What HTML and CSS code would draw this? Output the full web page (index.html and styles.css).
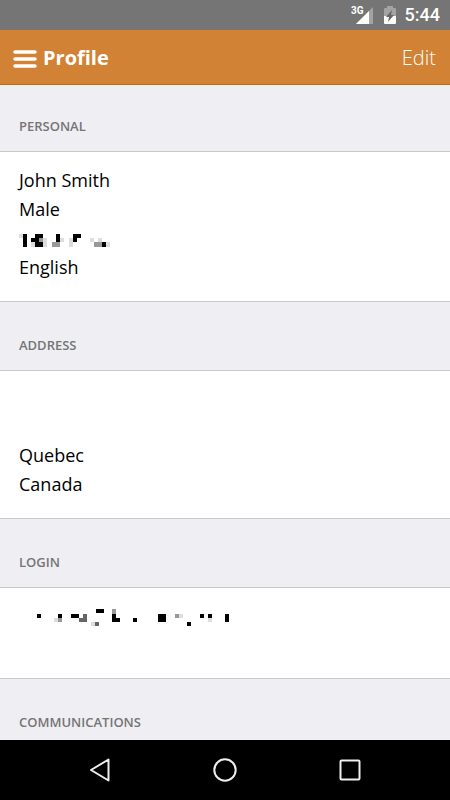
FILE: index.html
```html
<!DOCTYPE html>
<html lang="en">
<head>
<meta charset="utf-8">
<meta name="viewport" content="width=device-width, initial-scale=1">
<title>Profile</title>
<link rel="stylesheet" href="styles.css">
</head>
<body>
<div class="status">
  <svg class="signal" width="24" height="20" viewBox="0 0 24 20" aria-hidden="true">
    <path d="M22 2V19H5Z" fill="#a3a3a3"/>
    <path d="M18 6V19H5Z" fill="#fff"/>
    <text class="network" x="0" y="9">3G</text>
  </svg>
  <svg class="battery" width="12" height="20" viewBox="0 0 12 20" aria-hidden="true">
    <path d="M3 1H9V3H11Q12 3 12 4V11H0V4Q0 3 1 3H3Z" fill="#a3a3a3"/>
    <path d="M0 11H12V18Q12 19 11 19H1Q0 19 0 18Z" fill="#fff"/>
    <path d="M8 5L2 12H5L4 17L10 10H7Z" fill="#666"/>
  </svg>
  <span class="clock">5:44</span>
</div>
<header class="bar">
  <button class="menu" type="button" aria-label="Menu">
    <svg width="24" height="18" viewBox="0 0 24 18" aria-hidden="true">
      <path d="M2 2H22M2 9H22M2 16H22" stroke="#fff" stroke-width="3.500" stroke-linecap="round"/>
    </svg>
  </button>
  <h1 class="title">Profile</h1>
  <a class="edit" href="#edit">Edit</a>
</header>
<main class="content">
  <h2 class="heading">Personal</h2>
  <ul class="group">
    <li>John Smith</li>
    <li>Male</li>
    <li>
      <svg class="redacted" width="212" height="29" shape-rendering="crispEdges" aria-hidden="true">
        <path fill="#000" d="M4 10h4v13h-4zM16 10h8v4h-8zM12 14h8v4h-8zM16 18h8v5h-8zM37 10h4v8h-4zM54 10h8v4h-8zM54 14h4v4h-4zM83 18h4v5h-4z"/>
        <path fill="#999" d="M20 14h4v4h-4zM33 18h8v5h-8zM75 18h8v5h-8z"/>
        <path fill="#ddd" d="M0 10h4v4h-4zM24 14h4v9h-4zM12 18h4v5h-4zM41 14h4v4h-4zM50 14h4v4h-4zM50 18h4v5h-4zM71 14h4v4h-4zM79 14h4v4h-4zM87 18h4v5h-4z"/>
      </svg>
    </li>
    <li>English</li>
  </ul>
  <h2 class="heading">Address</h2>
  <ul class="group">
    <li></li>
    <li></li>
    <li>Quebec</li>
    <li>Canada</li>
  </ul>
  <h2 class="heading">Login</h2>
  <ul class="group">
    <li>
      <svg class="redacted" width="212" height="29" shape-rendering="crispEdges" aria-hidden="true">
        <path fill="#000" d="M18 12h4v4h-4zM39 12h4v4h-4zM52 12h8v4h-8zM77 7h8v4h-8zM93 12h4v8h-4zM97 16h4v4h-4zM114 16h4v4h-4zM139 12h8v8h-8zM168 20h4v4h-4zM181 12h4v4h-4zM189 12h4v4h-4zM206 12h4v8h-4z"/>
        <path fill="#666" d="M64 12h4v8h-4zM60 16h4v4h-4zM76 20h4v4h-4z"/>
        <path fill="#999" d="M93 7h4v5h-4zM156 12h4v4h-4zM39 16h4v4h-4z"/>
        <path fill="#ddd" d="M35 16h4v4h-4zM72 20h4v4h-4zM160 12h4v4h-4zM189 16h4v4h-4z"/>
      </svg>
    </li>
    <li></li>
  </ul>
  <h2 class="heading">Communications</h2>
</main>
<nav class="system">
  <button type="button" aria-label="Back">
    <svg width="24" height="26" viewBox="0 0 24 26" aria-hidden="true"><path d="M20.500 2.500V23.500L3 13Z"/></svg>
  </button>
  <button type="button" aria-label="Home">
    <svg width="24" height="26" viewBox="0 0 24 26" aria-hidden="true"><circle cx="12" cy="13" r="10.700"/></svg>
  </button>
  <button type="button" aria-label="Recent apps">
    <svg width="24" height="26" viewBox="0 0 24 26" aria-hidden="true"><rect x="2.500" y="3.500" width="19" height="19" rx="1"/></svg>
  </button>
</nav>
</body>
</html>
```
FILE: styles.css
```css
* {
  box-sizing: border-box;
}

body {
  margin: 0;
  height: 100vh;
  display: flex;
  flex-direction: column;
  background: #efeef3;
  color: #000;
  font-family: "Open Sans", sans-serif;
}

button {
  padding: 0;
  border: 0;
  background: none;
}

svg {
  display: block;
  fill: none;
}

.status {
  flex: none;
  height: 30px;
  padding: 0 10px;
  display: flex;
  align-items: center;
  justify-content: flex-end;
  background: #757575;
  color: #fff;
}

.signal {
  overflow: visible;
}

.network {
  fill: #fff;
  font: 700 10px Roboto, sans-serif;
}

.battery {
  margin: 0 9px;
}

.clock {
  font: 500 18px/30px Roboto, sans-serif;
}

.bar {
  flex: none;
  height: 55px;
  padding: 0 14px 0 13px;
  display: flex;
  align-items: center;
  background: #d18235;
  border-bottom: 1px solid #c46c12;
  color: #fff;
}

.menu {
  margin: 4px 6px 0 0;
}

.title {
  margin: 0;
  flex: 1;
  font-size: 20px;
  font-weight: 700;
}

.edit {
  color: #fff;
  font-size: 20px;
  font-weight: 300;
  text-decoration: none;
}

.content {
  flex: 1;
  min-height: 0;
  overflow: hidden;
}

.heading {
  margin: 0;
  padding: 33px 19px 15px;
  color: #757575;
  font-size: 13px;
  font-weight: 600;
  line-height: 20px;
  text-transform: uppercase;
}

.heading:first-child {
  padding-top: 31px;
}

.group {
  margin: 0;
  padding: 14px 19px 19px;
  border: solid #c8c7cc;
  border-width: 1px 0;
  background: #fff;
  font-size: 18px;
  font-weight: 400;
  line-height: 29px;
  list-style: none;
}

.group li {
  height: 29px;
}

.group li:empty {
  height: 28px;
}

.redacted {
  max-width: 100%;
}

.system {
  flex: none;
  height: 60px;
  padding: 0 38px;
  display: grid;
  grid-template-columns: repeat(3, 1fr);
  background: #000;
}

.system button {
  display: grid;
  place-items: center;
}

.system svg {
  stroke: #eee;
  stroke-width: 2;
  stroke-linejoin: round;
}
```
